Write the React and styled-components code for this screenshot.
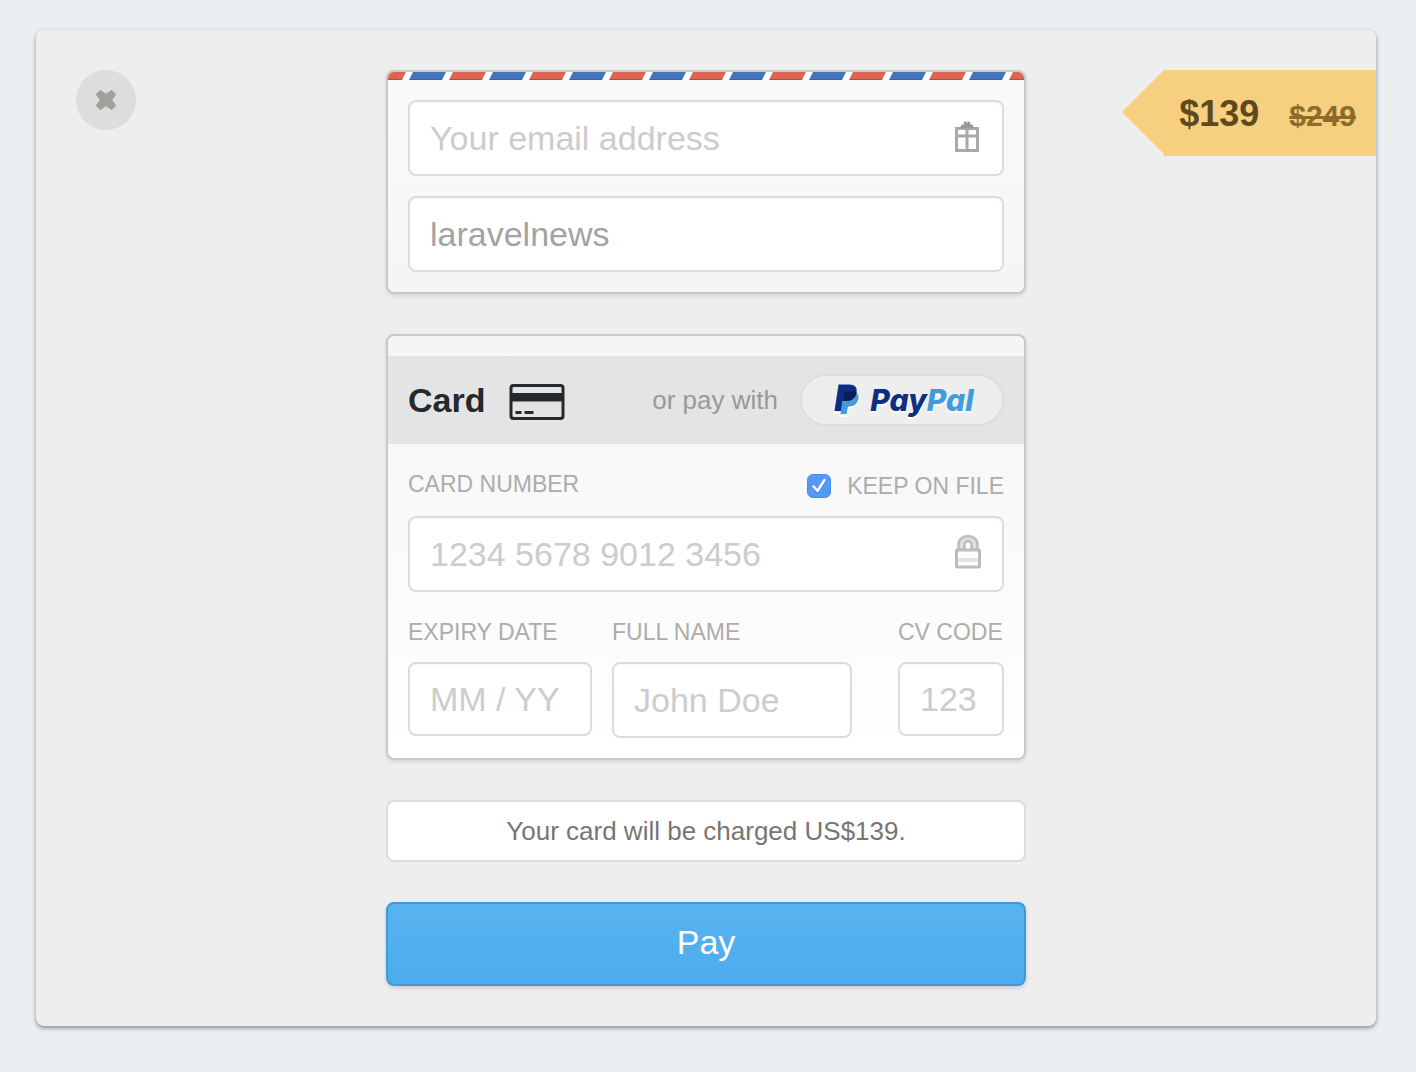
import React from "react";
import styled, { createGlobalStyle, css } from "styled-components";

const GlobalStyle = createGlobalStyle`
  *, *::before, *::after { box-sizing: border-box; }
  body {
    margin: 0;
    background: #ebeff2;
    font-family: "Liberation Sans", Arial, sans-serif;
    color: #25282c;
  }
  button, input { font: inherit; }
`;

const Page = styled.main`
  padding: 30px 40px 46px 36px;
`;

const Panel = styled.section`
  display: grid;
  grid-template-columns: 1fr minmax(0, 640px) 1fr;
  align-items: start;
  padding: 40px 0;
  background: #eeeeee;
  border-radius: 8px;
  box-shadow: 0 2px 4px rgba(60, 75, 85, 0.6);
`;

const CloseButton = styled.button`
  display: grid;
  place-items: center;
  width: 60px;
  height: 60px;
  margin-left: 40px;
  padding: 0;
  border: 0;
  border-radius: 50%;
  background: #dddddd;
  color: #a1a09a;
  cursor: pointer;
`;

const Form = styled.form`
  display: grid;
  gap: 40px;
`;

const Card = styled.div`
  overflow: hidden;
  border: 2px solid #c9c9c9;
  border-radius: 8px;
  background: ${(p) => p.$fill};
  box-shadow: 0 2px 4px rgba(0, 0, 0, 0.1);
`;

const Stripe = styled.svg`
  display: block;
  width: 100%;
  height: 8px;
`;

const Stack = styled.div`
  display: grid;
  gap: 20px;
  padding: 20px;
`;

const Field = styled.div`
  display: flex;
  align-items: center;
  height: ${(p) => (p.$short ? "74px" : "76px")};
  max-width: ${(p) => p.$max || "none"};
  padding: 0 20px;
  border: 2px solid #dcdcdc;
  border-radius: 8px;
  background: #ffffff;
  box-shadow: inset 0 2px 2px rgba(0, 0, 0, 0.02);
`;

const Input = styled.input`
  flex: 1;
  min-width: 0;
  width: 100%;
  height: 100%;
  padding: 0;
  border: 0;
  outline: 0;
  background: transparent;
  color: #a3a3a3;
  font-size: 34px;
  &::placeholder { color: #cccccc; opacity: 1; }
`;

const iconBox = css`
  display: block;
  flex: none;
  width: 28px;
  height: 40px;
`;

const FieldIcon = styled.svg`
  ${iconBox}
`;

const IconButton = styled.button`
  ${iconBox}
  padding: 0;
  border: 0;
  background: none;
  cursor: pointer;
`;

const MethodBar = styled.div`
  display: flex;
  align-items: center;
  gap: 22px;
  min-height: 88px;
  margin-top: 20px;
  padding: 0 20px;
  background: #e4e4e4;
`;

const MethodTitle = styled.h2`
  margin: 0;
  font-size: 34px;
  font-weight: 700;
  line-height: 40px;
`;

const Alternative = styled.span`
  margin-left: auto;
  color: #999999;
  font-size: 26px;
`;

const PayPalButton = styled.button`
  display: flex;
  align-items: center;
  justify-content: center;
  gap: 10px;
  min-width: 204px;
  height: 52px;
  padding: 0 24px 0 28px;
  border: 2px solid #dddddd;
  border-radius: 26px;
  background: #eeeeee;
  cursor: pointer;
`;

const PayPalName = styled.span`
  color: #0d2f83;
  font-family: Inter, "Liberation Sans", sans-serif;
  font-feature-settings: "cv11";
  font-size: 30px;
  font-style: italic;
  font-weight: 800;
  line-height: 40px;
  text-shadow: 0 2px 0 #ffffff;
`;

const PayPalTail = styled.span`
  color: #429bda;
`;

const CardBody = styled.div`
  padding: 28px 20px 20px;
`;

const LabelRow = styled.div`
  display: flex;
  justify-content: space-between;
  align-items: flex-start;
  margin-bottom: 16px;
`;

const Label = styled.label`
  display: block;
  color: #acacac;
  font-size: 23px;
  line-height: 24px;
  white-space: nowrap;
`;

const KeepLabel = styled(Label)`
  display: flex;
  align-items: center;
  gap: 16px;
  line-height: 28px;
`;

const CheckSlot = styled.span`
  display: grid;
  width: 24px;
  height: 24px;
  & > * { grid-area: 1 / 1; }
  & > svg { pointer-events: none; visibility: hidden; }
  & > input:checked + svg { visibility: visible; }
`;

const Checkbox = styled.input`
  appearance: none;
  width: 24px;
  height: 24px;
  margin: 0;
  border: 1px solid #bbbbbb;
  border-radius: 6px;
  background: #ffffff;
  &:checked {
    border-color: #4a8df0;
    background: #5499f7;
  }
`;

const Details = styled.div`
  display: grid;
  grid-template-columns: 184px minmax(0, 1fr) 106px;
  gap: 20px;
  margin-top: 28px;
`;

const Group = styled.div`
  display: grid;
  align-content: start;
  gap: 18px;
`;

const Notice = styled.p`
  margin: 0;
  padding: 14px 20px;
  border: 2px solid #dcdcdc;
  border-radius: 8px;
  background: #ffffff;
  color: #777672;
  font-size: 26px;
  line-height: 30px;
  text-align: center;
`;

const PayButton = styled.button`
  padding: 18px 20px 22px;
  border: 2px solid #409ad9;
  border-radius: 8px;
  background: linear-gradient(#58b4f0, #4dabed);
  box-shadow: 0 2px 4px rgba(0, 0, 0, 0.14);
  color: #ffffff;
  font-size: 34px;
  line-height: 40px;
  cursor: pointer;
`;

const PriceTag = styled.aside`
  display: flex;
  justify-self: end;
  align-items: flex-start;
  &::before {
    content: "";
    border: 42px solid transparent;
    border-left: 0;
    border-right-color: #f6d07f;
  }
`;

const Prices = styled.div`
  display: flex;
  align-items: baseline;
  gap: 30px;
  height: 86px;
  padding: 24px 20px 20px 15px;
  background: #f6d07f;
  font-weight: 700;
`;

const Price = styled.strong`
  color: #5d491c;
  font-size: 36px;
  line-height: 40px;
`;

const OldPrice = styled.s`
  color: #8c6b2b;
  font-size: 30px;
  line-height: 40px;
`;

function AirmailStripe() {
  return (
    <Stripe aria-hidden="true">
      <defs>
        <pattern id="airmail" width="80" height="8" patternUnits="userSpaceOnUse">
          <rect width="80" height="8" fill="#ffffff" />
          <path d="M-15 0H18L14 8H-19ZM65 0H98L94 8H61Z" fill="#dd6450" />
          <path d="M25 0H58L54 8H21Z" fill="#4674bb" />
          <path d="M0 7H14.5L14 8H0ZM21.5 7H54.5L54 8H21ZM61.5 7H80V8H61Z" fill="#333344" opacity=".3" />
        </pattern>
      </defs>
      <rect width="100%" height="8" fill="url(#airmail)" />
    </Stripe>
  );
}

function CloseIcon() {
  return (
    <svg width="20" height="20" viewBox="0 0 20 20" aria-hidden="true">
      <path
        d="M4.500 1 10 5 15.500 1 19 4.500 15 10 19 15.500 15.500 19 10 15 4.500 19 1 15.500 5 10 1 4.500Z"
        fill="currentColor"
        stroke="currentColor"
        strokeWidth="2"
        strokeLinejoin="round"
      />
    </svg>
  );
}

function GiftIcon() {
  return (
    <svg width="28" height="40" viewBox="0 0 28 40" aria-hidden="true">
      <g fill="none" stroke="#a9a9a9">
        <rect x="2.500" y="10.500" width="21" height="22" strokeWidth="3" />
        <path d="M2 18H24" strokeWidth="3" />
        <path d="M13 9V33" strokeWidth="3" />
      </g>
      <path d="M6 10 7.500 6.500 10 6.500 9.500 4 12 3.500 13 5 14 3.500 16.500 4 16 6.500 18.500 6.500 20 10Z" fill="#999999" />
    </svg>
  );
}

function LockIcon() {
  return (
    <FieldIcon viewBox="0 0 28 40" aria-hidden="true">
      <path d="M4.500 16V10.500a9.500 8.500 0 0 1 19 0V16Z" fill="#e0e0e0" stroke="#bdbdbd" strokeWidth="2.500" />
      <path d="M10.500 16V10.500a3.500 3.500 0 0 1 7 0V16" fill="#ffffff" stroke="#bdbdbd" strokeWidth="2.500" />
      <rect x="2.500" y="16" width="23" height="17" rx="1" fill="#ffffff" stroke="#bcbcbc" strokeWidth="3" />
      <path d="M4 26H24" stroke="#e4e4e4" strokeWidth="4" />
    </FieldIcon>
  );
}

function CreditCardIcon() {
  return (
    <svg width="58" height="40" viewBox="0 0 58 40" aria-hidden="true">
      <rect x="4" y="5.500" width="52" height="33" rx="2.500" fill="none" stroke="#25282c" strokeWidth="3" />
      <path d="M4 13H56V21.500H4Z" fill="#25282c" />
      <path d="M8.500 31H14.500V34H8.500ZM17.500 31H26.500V34H17.500Z" fill="#25282c" />
    </svg>
  );
}

function PayPalMark() {
  return (
    <svg width="26" height="34" viewBox="0 0 26 34" aria-hidden="true">
      <path d="M0 29H6L5 32H12L13.500 24C20 24 24 20 25 14V16C24 22 20 25 14 26L12.500 34H5.500V31H0Z" fill="#ffffff" />
      <path d="M22.500 9.500C25.300 12 25 16 23 19.500 21 22.500 18 23.500 14 23.500L12.500 31H6.500L9.500 12Z" fill="#429bda" />
      <path d="M4.500 1.500H15C21 1.500 23.500 4.500 22.500 9.500 21.300 15 18 18 12 18H8.500L7 28H0.500Z" fill="#0d2f83" />
      <path d="M10.500 8.500H20Q22 8.500 22.500 9.500C21.300 15 18 18 12 18H9Z" fill="#081f5c" />
    </svg>
  );
}

export default function App() {
  return (
    <>
      <GlobalStyle />
      <Page>
        <Panel>
          <CloseButton type="button" aria-label="Close">
            <CloseIcon />
          </CloseButton>

          <Form onSubmit={(e) => e.preventDefault()}>
            <Card $fill="linear-gradient(#fafafa, #f5f5f5)">
              <AirmailStripe />
              <Stack>
                <Field>
                  <Input type="email" aria-label="Your email address" placeholder="Your email address" />
                  <IconButton type="button" aria-label="Send as a gift">
                    <GiftIcon />
                  </IconButton>
                </Field>
                <Field>
                  <Input type="text" aria-label="Offer code" defaultValue="laravelnews" spellCheck={false} />
                </Field>
              </Stack>
            </Card>

            <Card $fill="linear-gradient(#f5f5f5, #ffffff)">
              <MethodBar>
                <MethodTitle>Card</MethodTitle>
                <CreditCardIcon />
                <Alternative>or pay with</Alternative>
                <PayPalButton type="button">
                  <PayPalMark />
                  <PayPalName>
                    Pay<PayPalTail>Pal</PayPalTail>
                  </PayPalName>
                </PayPalButton>
              </MethodBar>
              <CardBody>
                <LabelRow>
                  <Label htmlFor="card-number">CARD NUMBER</Label>
                  <KeepLabel htmlFor="keep">
                    <CheckSlot>
                      <Checkbox id="keep" type="checkbox" defaultChecked />
                      <svg width="24" height="24" viewBox="0 0 24 24" aria-hidden="true">
                        <path
                          d="M6.500 13.500 10.500 18 17.500 7"
                          fill="none"
                          stroke="#3f7fd8"
                          strokeWidth="3"
                          strokeLinecap="round"
                          strokeLinejoin="round"
                        />
                        <path
                          d="M6.500 12.500 10.500 17 17.500 6"
                          fill="none"
                          stroke="#ffffff"
                          strokeWidth="2.500"
                          strokeLinecap="round"
                          strokeLinejoin="round"
                        />
                      </svg>
                    </CheckSlot>
                    KEEP ON FILE
                  </KeepLabel>
                </LabelRow>
                <Field>
                  <Input id="card-number" type="text" inputMode="numeric" placeholder="1234 5678 9012 3456" />
                  <LockIcon />
                </Field>
                <Details>
                  <Group>
                    <Label htmlFor="expiry">EXPIRY DATE</Label>
                    <Field $short>
                      <Input id="expiry" type="text" placeholder="MM / YY" />
                    </Field>
                  </Group>
                  <Group>
                    <Label htmlFor="full-name">FULL NAME</Label>
                    <Field $max="240px">
                      <Input id="full-name" type="text" placeholder="John Doe" />
                    </Field>
                  </Group>
                  <Group>
                    <Label htmlFor="cv-code">CV CODE</Label>
                    <Field $short>
                      <Input id="cv-code" type="text" placeholder="123" />
                    </Field>
                  </Group>
                </Details>
              </CardBody>
            </Card>

            <Notice>Your card will be charged US$139.</Notice>
            <PayButton type="submit">Pay</PayButton>
          </Form>

          <PriceTag>
            <Prices>
              <Price>$139</Price>
              <OldPrice>$249</OldPrice>
            </Prices>
          </PriceTag>
        </Panel>
      </Page>
    </>
  );
}
